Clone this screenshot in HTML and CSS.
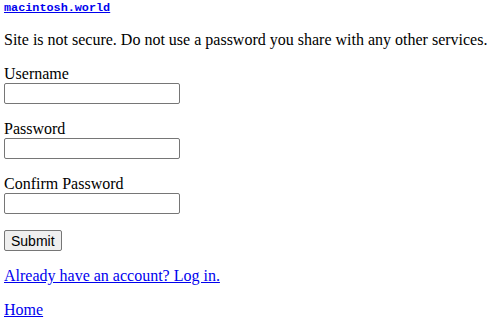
FILE: index.html
```html
<!DOCTYPE html>
<html>
<head>
<meta charset="utf-8">
<link rel="stylesheet" href="styles.css">
</head>
<body>
<header class="site"><a class="brand" href="#">macintosh.world</a></header>
<p class="warn">Site is not secure. Do not use a password you share with any other services.</p>
<form class="form">
  <div class="field">
    <label class="label" for="u">Username</label>
    <input class="input" id="u" type="text">
  </div>
  <div class="field">
    <label class="label" for="p">Password</label>
    <input class="input" id="p" type="password">
  </div>
  <div class="field">
    <label class="label" for="c">Confirm Password</label>
    <input class="input" id="c" type="password">
  </div>
  <div class="field">
    <button class="submit" type="submit">Submit</button>
  </div>
</form>
<p class="line"><a href="#" class="link">Already have an account? Log in.</a></p>
<p class="line"><a href="#" class="link">Home</a></p>
</body>
</html>
```
FILE: styles.css
```css
body {
  margin: 0 4px;
  font-family: "Liberation Serif", serif;
  font-size: 16px;
  color: #000;
  background: #fff;
}
.site {
  font-family: "Liberation Mono", monospace;
  font-size: 11.8px;
  line-height: 14px;
  padding-top: 1px;
  font-weight: bold;
}
.brand { color: #0000ee; }
.warn { margin: 16px 0; }
.form { margin: 0; display: flex; flex-direction: column; gap: 16px; }
.field { display: flex; flex-direction: column; align-items: flex-start; }
.label { line-height: 18px; }
.input {
  width: 176px;
  height: 21px;
  box-sizing: border-box;
  border: 1px solid #767676;
  border-radius: 2px;
  margin: 0;
  padding: 1px 2px;
}
.submit {
  font-family: "Liberation Sans", sans-serif;
  font-size: 14px;
  height: 21px;
  padding: 1px 6px;
  border: 1px solid #767676;
  border-radius: 2px;
  background: #efefef;
  color: #000;
  margin: 0;
}
.line { margin: 16px 0; }
.link { color: #0000ee; }
```
